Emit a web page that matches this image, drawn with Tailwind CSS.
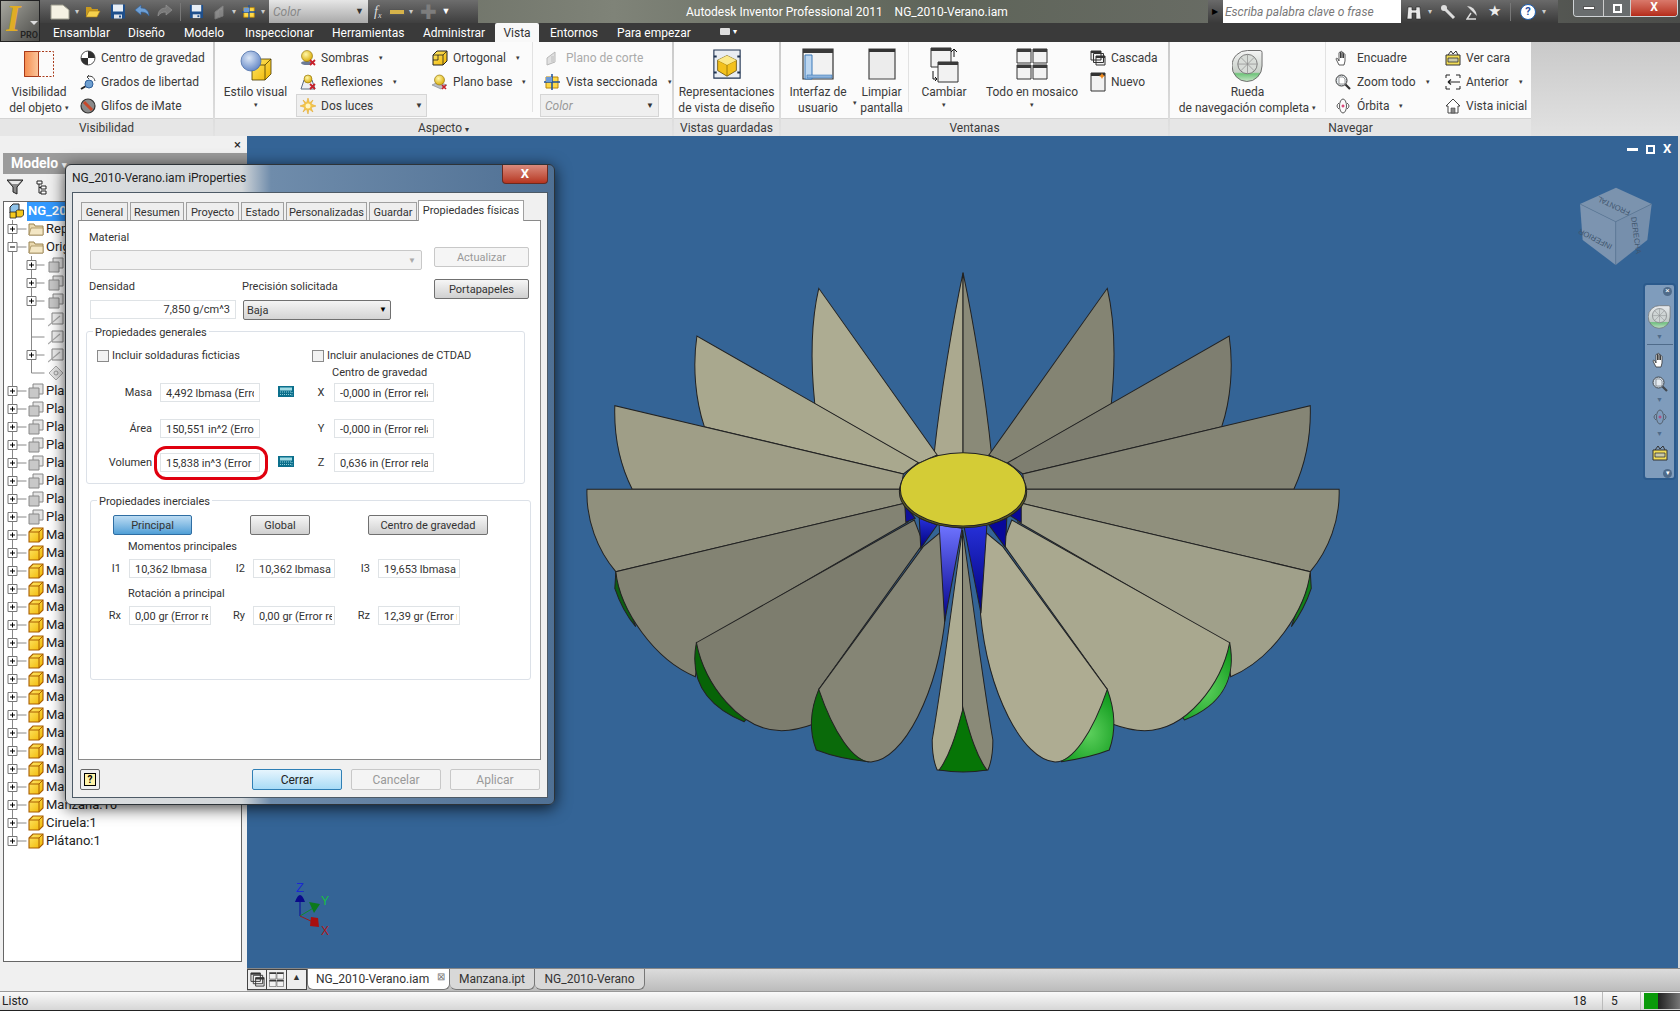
<!DOCTYPE html>
<html lang="es">
<head>
<meta charset="UTF-8">
<title>Autodesk Inventor Professional 2011</title>
<script src="https://cdn.jsdelivr.net/npm/@tailwindcss/browser@4"></script>
</head>
<body class="relative w-[1680px] h-[1011px] overflow-hidden flex flex-col bg-[#f0f0f0] text-[12px] text-[#3a3a3a] font-['Roboto',sans-serif]">

<!-- icon sheet -->
<svg class="absolute w-0 h-0" aria-hidden="true">
  <defs>
    <linearGradient id="gOrange" x1="0" x2="1"><stop offset="0" stop-color="#f58a4b"/><stop offset="1" stop-color="#fbc9a0"/></linearGradient>
    <radialGradient id="gBall" cx=".4" cy=".35" r=".7"><stop offset="0" stop-color="#dbe7f7"/><stop offset="1" stop-color="#5f83c4"/></radialGradient>
    <radialGradient id="gYellowBall" cx=".4" cy=".35" r=".7"><stop offset="0" stop-color="#fff7a8"/><stop offset="1" stop-color="#d8a800"/></radialGradient>
    <linearGradient id="gCube" x1="0" y1="0" x2="1" y2="1"><stop offset="0" stop-color="#ffe96a"/><stop offset="1" stop-color="#f0b400"/></linearGradient>
    <linearGradient id="gWheel" x1="0" y1="0" x2="0" y2="1"><stop offset="0" stop-color="#f4f4f4"/><stop offset=".7" stop-color="#c8cfc8"/><stop offset=".75" stop-color="#6fc47a"/><stop offset="1" stop-color="#c8e6c8"/></linearGradient>
    <linearGradient id="gBlueL" x1="0" y1="0" x2="0" y2="1"><stop offset="0" stop-color="#6f74ff"/><stop offset="1" stop-color="#00008a"/></linearGradient>
    <linearGradient id="gBlueD" x1="0" y1="0" x2="0" y2="1"><stop offset="0" stop-color="#2630d8"/><stop offset="1" stop-color="#00007a"/></linearGradient>
    <radialGradient id="gGreenR" cx=".6" cy=".6" r=".6"><stop offset="0" stop-color="#5ccf5c"/><stop offset="1" stop-color="#0f9a1c"/></radialGradient>
  </defs>
  <symbol id="i-new" viewBox="0 0 20 20"><path d="M1 3h12l6 5v9H1z" fill="#f4f1e2" stroke="#9b9b8c"/></symbol>
  <symbol id="i-open" viewBox="0 0 16 16"><path d="M1 3h5l1 2h6v2H4L1 13z" fill="#c99a1e"/><path d="M4 7h11l-3 6H1z" fill="#f5d04c" stroke="#a87a10" stroke-width=".6"/></symbol>
  <symbol id="i-save" viewBox="0 0 16 16"><path d="M1 1h14v14H1z" fill="#1e4f8c"/><path d="M3 1h10v7H3z" fill="#e8eef5"/><path d="M4 11h8v4H4z" fill="#dfe4ea"/><path d="M9 12h2v2H9z" fill="#1e4f8c"/></symbol>
  <symbol id="i-undo" viewBox="0 0 16 16"><path d="M1 6l6-5v3c5 0 8 3 8 8-2-3-4-4-8-4v3z" fill="#6ea0d6" stroke="#2f5f9a" stroke-width=".6"/></symbol>
  <symbol id="i-redo" viewBox="0 0 16 16"><path d="M15 6L9 1v3C4 4 1 7 1 12c2-3 4-4 8-4v3z" fill="#7a7a7a" stroke="#999" stroke-width=".6"/></symbol>
  <symbol id="i-cog" viewBox="0 0 16 16"><circle cx="8" cy="8" r="7" fill="#fff" stroke="#555"/><path d="M8 8V1a7 7 0 0 1 7 7zM8 8v7a7 7 0 0 1-7-7z" fill="#2f2f2f"/></symbol>
  <symbol id="i-dof" viewBox="0 0 16 16"><path d="M1 15l5-3" stroke="#222" stroke-width="2"/><circle cx="9" cy="10" r="4" fill="#6e9fd0" stroke="#2f5f9a"/><path d="M7 3c4-2 7 0 8 4M7 3l2-2M7 3l2 2" fill="none" stroke="#444"/></symbol>
  <symbol id="i-imate" viewBox="0 0 16 16"><circle cx="8" cy="8" r="7" fill="#8a8a8a" stroke="#333" stroke-width="1.2"/><path d="M4 4l8 8" stroke="#c9482a" stroke-width="3"/></symbol>
  <symbol id="i-style" viewBox="0 0 32 32"><path d="M12 14l5-5h14v15l-6 6H12z" fill="url(#gCube)" stroke="#4a3a00" stroke-width=".8"/><path d="M25 30V15l6-6M25 15H12" fill="none" stroke="#4a3a00" stroke-width=".8"/><circle cx="11" cy="11" r="10" fill="url(#gBall)" stroke="#4b6ea8" stroke-width=".8"/></symbol>
  <symbol id="i-shadow" viewBox="0 0 16 16"><ellipse cx="7" cy="13" rx="6" ry="2" fill="#6c7a96"/><circle cx="7" cy="6" r="5.5" fill="url(#gYellowBall)" stroke="#8a6c00" stroke-width=".6"/><path d="M10 10l5 5M15 10l-5 5" stroke="#c8202a" stroke-width="1.8"/></symbol>
  <symbol id="i-reflect" viewBox="0 0 16 16"><path d="M1 15l3-9h8l3 9z" fill="#eceff4" stroke="#5a6a80"/><circle cx="8" cy="5" r="4" fill="url(#gYellowBall)" stroke="#8a6c00" stroke-width=".6"/><path d="M10 10l5 5M15 10l-5 5" stroke="#c8202a" stroke-width="1.8"/></symbol>
  <symbol id="i-burst" viewBox="0 0 16 16"><path d="M8 0l1.500 5L13 2l-2 4 5 2-5 1.500 2 4.500-4-3-1 5-1.500-5L3 14l2-4.500L0 8l5-2-2-4 3.500 3z" fill="#f5c84a" stroke="#e0a020" stroke-width=".5"/><circle cx="8" cy="8" r="2.500" fill="#fff4c0"/></symbol>
  <symbol id="i-ortho" viewBox="0 0 16 16"><path d="M1 5l4-4h10v10l-4 4H1z" fill="url(#gCube)" stroke="#222"/><path d="M1 5h10v10M11 5l4-4M1 10h5V5" fill="none" stroke="#222" stroke-width=".8"/></symbol>
  <symbol id="i-base" viewBox="0 0 16 16"><path d="M0 11l6-3 9 3-6 4z" fill="#b9bec6" stroke="#7a808a" stroke-width=".6"/><circle cx="7.500" cy="6" r="5" fill="url(#gYellowBall)" stroke="#8a6c00" stroke-width=".6"/><path d="M10 11l4 4M14 11l-4 4" stroke="#c8202a" stroke-width="1.600"/></symbol>
  <symbol id="i-cut" viewBox="0 0 16 16"><path d="M3 8l8-6v10l-8 3z" fill="#e0e0e0" stroke="#b8b8b8"/><path d="M7 6h4v6H7z" fill="#cfcfcf"/></symbol>
  <symbol id="i-section" viewBox="0 0 16 16"><path d="M2 3h12v11H2z" fill="#ffd948" stroke="#b8860b"/><path d="M8 0v16M0 8h16" stroke="#1d4f9c" stroke-width="1.500"/><path d="M2 3h6v5H2z" fill="#6d9bd8"/></symbol>
  <symbol id="i-rep" viewBox="0 0 32 32"><path d="M2 1h28v30H2z" fill="#e9edf2" stroke="#1f3350" stroke-width="1.200"/><path d="M16 7l10 5v11l-10 6-10-6V12z" fill="#f3c11c" stroke="#5a4400" stroke-width=".8"/><path d="M6 12l10 5 10-5M16 17v12" fill="none" stroke="#8a6800" stroke-width=".8"/><path d="M16 7l10 5-10 5-10-5z" fill="#fbe98a"/><path d="M2 7h3v2H2zM27 7h3v2h-3zM2 24h3v2H2zM27 24h3v2h-3z" fill="#1f3350"/></symbol>
  <symbol id="i-ui" viewBox="0 0 32 32"><path d="M1 1h30v30H1z" fill="#f2f2f2" stroke="#333" stroke-width="1.200"/><path d="M1 1h30v4H1z" fill="#3a3a3a"/><path d="M3 7h7v24H3z" fill="#bcd6f0" stroke="#3a78b8"/><path d="M5 27h25v3H5z" fill="#8fb4dc" stroke="#3a78b8" stroke-width=".6"/></symbol>
  <symbol id="i-clean" viewBox="0 0 28 32"><path d="M1 1h26v30H1z" fill="#ececec" stroke="#444" stroke-width="1.200"/><path d="M1 1h26v3H1z" fill="#333"/></symbol>
  <symbol id="i-switch" viewBox="0 0 32 36"><path d="M3 1h20v19H3z" fill="#f2f2f2" stroke="#333"/><path d="M3 1h20v3H3z" fill="#3a3a3a"/><path d="M10 15h20v20H10z" fill="#f2f2f2" stroke="#333"/><path d="M10 15h20v3H10z" fill="#3a3a3a"/><path d="M26 10V2l-3 3M26 2l3 3M5 24v8h4m0 0l-2-2m2 2l-2 2" fill="none" stroke="#111"/></symbol>
  <symbol id="i-tile" viewBox="0 0 32 32"><g fill="#f2f2f2" stroke="#333"><path d="M1 1h14v14H1zM17 1h14v14H17zM1 17h14v14H1zM17 17h14v14H17z"/></g><g fill="#3a3a3a"><path d="M1 1h14v3H1zM17 1h14v3H17zM1 17h14v3H1zM17 17h14v3H17z"/></g></symbol>
  <symbol id="i-cascade" viewBox="0 0 16 16"><g fill="#f2f2f2" stroke="#333"><path d="M1 1h10v9H1zM3.500 3.500h10v9h-10zM6 6h9v9H6z"/></g><path d="M1 1h10v2H1zM6 6h9v2H6z" fill="#333"/></symbol>
  <symbol id="i-newwin" viewBox="0 0 16 20"><path d="M1 1h14v18H1z" fill="#f2f2f2" stroke="#333"/><path d="M1 1h14v3H1z" fill="#333"/><path d="M12 1l1 2 2 1-2 1-1 2-1-2-2-1 2-1z" fill="#f08a1c"/></symbol>
  <symbol id="i-wheel" viewBox="0 0 32 34"><path d="M16 1h13q2 0 2 2v14a15.500 16 0 1 1-15-16z" fill="url(#gWheel)" stroke="#6b6b6b"/><circle cx="16" cy="15" r="10" fill="#d8dcd8" stroke="#7a7a7a"/><path d="M16 5v20M6 15h20M9 8l14 14M23 8L9 22" stroke="#8a8a8a" stroke-width=".7"/></symbol>
  <symbol id="i-hand" viewBox="0 0 16 16"><path d="M4 15L1 9c0-1 1-1 2 0l1 2V3c0-1 1.500-1 1.500 0v5V2c0-1 1.500-1 1.500 0v6V3c0-1 1.500-1 1.500 0v5V4.500c0-1 1.500-1 1.500 0V11l-1 4z" fill="#fff" stroke="#333" stroke-width=".8"/></symbol>
  <symbol id="i-zoom" viewBox="0 0 16 16"><circle cx="6.500" cy="6.500" r="5.500" fill="#e8eef2" stroke="#333"/><path d="M4 3h4l2 2v5H4z" fill="#fff" stroke="#555" stroke-width=".6"/><path d="M10.500 10.500L15 15" stroke="#333" stroke-width="2.200"/></symbol>
  <symbol id="i-orbit" viewBox="0 0 16 16"><ellipse cx="8" cy="8" rx="3.500" ry="7" fill="none" stroke="#333" stroke-width=".8"/><path d="M4 5Q0 8 4 11M12 5q4 3 0 6" fill="none" stroke="#333" stroke-width=".8"/><path d="M6.500 8h3M8 6.500v3" stroke="#d01050"/></symbol>
  <symbol id="i-face" viewBox="0 0 16 16"><path d="M3 5l3-4 2 3 3-3 2 4" fill="none" stroke="#333"/><path d="M1 5h14v10H1z" fill="#f1dc56" stroke="#333"/><path d="M3 8h10v4H3z" fill="#c9c9a8" stroke="#333" stroke-width=".8"/></symbol>
  <symbol id="i-prev" viewBox="0 0 16 16"><path d="M1 4V1h4M11 1h4v3M15 12v3h-4M5 15H1v-3" fill="none" stroke="#222"/><path d="M3 8h12M3 8l3-2.500M3 8l3 2.500" fill="none" stroke="#222" stroke-width="1.200"/></symbol>
  <symbol id="i-home" viewBox="0 0 16 16"><path d="M1 8l7-7 7 7h-2v7H3V8z" fill="#fff" stroke="#444"/><path d="M6 15v-5h4v5z" fill="#888" stroke="#444" stroke-width=".6"/></symbol>
  <symbol id="i-part" viewBox="0 0 16 16"><path d="M1 5l4-4h10v10l-4 4H1z" fill="url(#gCube)" stroke="#a85c00" stroke-width="1.100"/><path d="M1 5h10v10M11 5l4-4" fill="none" stroke="#a85c00"/></symbol>
  <symbol id="i-asm" viewBox="0 0 16 16"><path d="M1 4l3-3h6v6l-3 3H1z" fill="#8fc3ea" stroke="#222"/><path d="M7 8l1.500-1h6v5l-2 2H7z" fill="#f5c91c" stroke="#222" stroke-width=".8"/><path d="M1 9h6v6H1z" fill="#f5c91c" stroke="#222" stroke-width=".8"/></symbol>
  <symbol id="i-folder" viewBox="0 0 16 16"><path d="M1 3h5l1 2h8v9H1z" fill="#e9d8ae" stroke="#9a8350"/><path d="M1 14l2-7h12v7z" fill="#f3e6c4" stroke="#9a8350" stroke-width=".7"/></symbol>
  <symbol id="i-plane" viewBox="0 0 16 16"><path d="M5 1h10v10H5z" fill="#e4e4e4" stroke="#888"/><path d="M1 5h10v10H1z" fill="#c8c8c8" stroke="#888"/></symbol>
  <symbol id="i-axis" viewBox="0 0 16 16"><path d="M4 2h11v11H4z" fill="#f0f0f0" stroke="#888"/><path d="M0 15L12 5" stroke="#aaa" stroke-width="1.200"/></symbol>
  <symbol id="i-point" viewBox="0 0 16 16"><path d="M8 1l7 7-7 7-7-7z" fill="#e8e8e8" stroke="#aaa"/><circle cx="8" cy="8" r="2" fill="none" stroke="#999"/></symbol>
  <symbol id="i-filter" viewBox="0 0 16 16"><path d="M0 1h16l-6 7v7l-4-2V8z" fill="#888" stroke="#222"/><path d="M2 2h12l-3 3H5z" fill="#e8e8e8"/></symbol>
  <symbol id="i-calc" viewBox="0 0 16 11"><path d="M0 0h16v11H0z" fill="#0b6f8c"/><path d="M2 1.500h12v3H2z" fill="#9fdbe4"/><path d="M2 6h12v1M2 8.500h12v1" stroke="#8fd0da" stroke-dasharray="1 1" fill="none"/></symbol>
</svg>

<!-- app button + title bar + ribbon tabs -->
<div class="flex h-[42px] shrink-0 bg-[#3a3a3a]">
  <div class="relative w-[40px] h-[42px] border border-[#222] bg-linear-to-br from-[#a8a8a0] to-[#4b4b48] overflow-hidden">
    <span class="absolute left-[5px] top-[-3px] text-[37px] leading-[42px] font-bold italic text-[#e0ac25] font-['Liberation_Serif',serif]">I</span>
    <span class="absolute left-[29px] top-[20px] w-0 h-0 border-x-[4px] border-x-transparent border-t-[4px] border-t-[#ddd]"></span>
    <span class="absolute right-[1px] bottom-0 text-[9px] leading-[12px] text-[#222] font-semibold">PRO</span>
  </div>
  <div class="flex-1 flex flex-col">
    <div class="flex h-[23px] bg-[linear-gradient(90deg,#4d5148,#7f8378_35%,#5e6459_55%,#6a6d66_75%,#4b4d4a)]">
      <div class="w-[438px] flex items-center pl-[10px] bg-linear-to-b from-[#6d6d6d] to-[#3f3f3f] text-[#ccc]">
        <svg class="w-[20px] h-[20px]"><use href="#i-new"/></svg>
        <span class="ml-[5px] text-[8px]">▾</span>
        <svg class="ml-[6px] w-[16px] h-[16px]"><use href="#i-open"/></svg>
        <svg class="ml-[9px] w-[16px] h-[17px]"><use href="#i-save"/></svg>
        <svg class="ml-[8px] w-[16px] h-[16px]"><use href="#i-undo"/></svg>
        <svg class="ml-[7px] w-[16px] h-[16px]"><use href="#i-redo"/></svg>
        <span class="ml-[7px] w-px h-[18px] bg-[#777]"></span>
        <svg class="ml-[8px] w-[15px] h-[17px]"><use href="#i-save"/></svg>
        <svg class="ml-[8px] w-[16px] h-[16px] opacity-40"><use href="#i-cut"/></svg>
        <span class="ml-[4px] text-[8px]">▾</span>
        <svg class="ml-[6px] w-[14px] h-[16px]"><use href="#i-section"/></svg>
        <span class="ml-[5px] text-[8px]">▾</span>
        <div class="ml-[4px] w-[99px] h-[23px] flex items-center justify-between px-[4px] bg-linear-to-b from-[#e6e6e6] to-[#a9a9a9] text-[#888] italic"><span>Color</span><span class="text-[9px] not-italic text-[#333]">▼</span></div>
        <span class="ml-[6px] italic text-[14px] text-[#ddd] font-['Liberation_Serif',serif]">f<sub class="text-[8px]">x</sub></span>
        <span class="ml-[8px] w-[16px] h-[6px] bg-[#d6b34a] border border-[#555]"></span>
        <span class="ml-[4px] text-[8px]">▾</span>
        <span class="ml-[7px] text-[20px] leading-[20px] text-[#7d7d7d]">✚</span>
        <span class="ml-[4px] text-[9px] text-white">▼</span>
      </div>
      <div class="w-[730px] pl-[208px] leading-[24px] text-white whitespace-nowrap">Autodesk Inventor Professional 2011 &nbsp; &nbsp;NG_2010-Verano.iam</div>
      <div class="w-[350px] flex items-center pl-[4px] bg-linear-to-b from-[#6a6a6a] to-[#3a3a3a] text-[#ccc]">
        <span class="text-[8px] w-[11px] text-black">▶</span>
        <div class="w-[178px] h-[23px] bg-white italic text-[#777] leading-[24px] pl-[2px]">Escriba palabra clave o frase</div>
        <svg class="ml-[5px] w-[16px] h-[16px]" viewBox="0 0 16 16"><path d="M2 3h4v3h4V3h4l1 12h-5V9H6v6H1z" fill="#e8e8e8" stroke="#222" stroke-width=".6"/></svg>
        <span class="ml-[6px] text-[8px]">▾</span>
        <svg class="ml-[8px] w-[16px] h-[16px]" viewBox="0 0 16 16"><circle cx="4" cy="4" r="3" fill="#ddd"/><path d="M5 5l9 9" stroke="#ddd" stroke-width="3"/></svg>
        <svg class="ml-[10px] w-[14px] h-[16px]" viewBox="0 0 14 16"><path d="M1 2q8 0 10 10z" fill="#ddd"/><path d="M5 9l-4 6h9" fill="none" stroke="#ddd" stroke-width="1.400"/></svg>
        <span class="ml-[8px] text-[15px] leading-[15px] text-[#eee]">★</span>
        <span class="ml-[9px] w-px h-[18px] bg-[#777]"></span>
        <span class="ml-[9px] w-[16px] h-[16px] rounded-full bg-white border border-[#1f5fb0] text-center text-[11px] leading-[14px] font-bold text-[#1f4fa0]">?</span>
        <span class="ml-[6px] text-[8px]">▾</span>
      </div>
      <div class="ml-[15px] flex h-[17px] w-[105px] border border-t-0 border-[#cfd3d6] rounded-b-[4px] overflow-hidden">
        <div class="w-[30px] flex items-center justify-center bg-[#73787a]/70 border-r border-[#ccc]"><span class="w-[12px] h-[4px] bg-white border border-[#555]"></span></div>
        <div class="w-[27px] flex items-center justify-center bg-[#73787a]/70 border-r border-[#ccc]"><span class="w-[9px] h-[9px] border-2 border-white"></span></div>
        <div class="flex-1 text-center text-[12px] leading-[15px] font-bold text-white bg-linear-to-b from-[#d9796b] to-[#b52a18]">X</div>
      </div>
    </div>
    <div class="flex h-[19px] text-white leading-[21px]">
      <span class="w-[13px]"></span>
      <span class="w-[75px]">Ensamblar</span>
      <span class="w-[56px]">Diseño</span>
      <span class="w-[61px]">Modelo</span>
      <span class="w-[87px]">Inspeccionar</span>
      <span class="w-[91px]">Herramientas</span>
      <span class="w-[72px]">Administrar</span>
      <span class="w-[44px] text-center bg-[#f8f8f8] text-[#333] rounded-t-[2px]">Vista</span>
      <span class="w-[11px]"></span>
      <span class="w-[67px]">Entornos</span>
      <span class="w-[103px]">Para empezar</span>
      <span class="w-[10px] h-[7px] mt-[5px] bg-[#ddd] rounded-[1px]"></span>
      <span class="ml-[3px] text-[8px] leading-[17px]">▾</span>
    </div>
  </div>
</div>

<!-- ribbon -->
<div class="flex h-[94px] shrink-0 bg-linear-to-b from-[#c9c9c9] to-[#e2e2e2]">
  <!-- Visibilidad -->
  <section class="w-[213px] mr-[2px] flex flex-col bg-[#fbfbfb]">
    <div class="flex h-[76px]">
      <div class="w-[78px] flex flex-col items-center">
        <svg class="shrink-0 mt-[9px] w-[30px] h-[26px] mb-[7px]" viewBox="0 0 30 26"><path d="M0 0h15v26H0z" fill="url(#gOrange)"/><path d="M.5.500h29v25H.5z" fill="none" stroke="#a83a1a" stroke-dasharray="2 1.500"/><path d="M.5.500h14v25H.5z" fill="none" stroke="#a83a1a"/></svg>
        <div class="text-center leading-[16px]">Visibilidad<br>del objeto <span class="text-[7px] align-top">▾</span></div>
      </div>
      <div class="pl-[2px] pt-[4px]">
        <div class="flex items-center h-[24px]"><svg class="w-[16px] h-[16px] mr-[5px]"><use href="#i-cog"/></svg>Centro de gravedad</div>
        <div class="flex items-center h-[24px]"><svg class="w-[16px] h-[16px] mr-[5px]"><use href="#i-dof"/></svg>Grados de libertad</div>
        <div class="flex items-center h-[24px]"><svg class="w-[16px] h-[16px] mr-[5px]"><use href="#i-imate"/></svg>Glifos de iMate</div>
      </div>
    </div>
    <div class="h-[18px] text-center leading-[19px] bg-[#e6e6e6] border-t border-[#d4d4d4]">Visibilidad</div>
  </section>
  <!-- Aspecto -->
  <section class="w-[457px] mr-[2px] flex flex-col bg-[#fbfbfb]">
    <div class="flex h-[76px]">
      <div class="w-[81px] flex flex-col items-center">
        <svg class="shrink-0 mt-[8px] w-[32px] h-[32px] mb-[2px]"><use href="#i-style"/></svg>
        <div class="text-center leading-[16px]">Estilo visual<br><span class="text-[7px] leading-[10px] block">▾</span></div>
      </div>
      <div class="w-[136px] pt-[4px]">
        <div class="flex items-center h-[24px] pl-[4px]"><svg class="w-[16px] h-[16px] mr-[5px]"><use href="#i-shadow"/></svg>Sombras<span class="ml-[10px] text-[7px]">▾</span></div>
        <div class="flex items-center h-[24px] pl-[4px]"><svg class="w-[16px] h-[16px] mr-[5px]"><use href="#i-reflect"/></svg>Reflexiones<span class="ml-[10px] text-[7px]">▾</span></div>
        <div class="flex items-center justify-between h-[23px] w-[131px] border border-[#d5d5d5] bg-[#efefef] px-[3px]"><div class="flex items-center"><svg class="w-[16px] h-[16px] mr-[5px]"><use href="#i-burst"/></svg>Dos luces</div><span class="text-[8px]">▼</span></div>
      </div>
      <div class="w-[101px] pt-[4px] border-r border-[#e2e2e2] h-[70px]">
        <div class="flex items-center h-[24px]"><svg class="w-[16px] h-[16px] mr-[5px]"><use href="#i-ortho"/></svg>Ortogonal<span class="ml-[10px] text-[7px]">▾</span></div>
        <div class="flex items-center h-[24px]"><svg class="w-[16px] h-[16px] mr-[5px]"><use href="#i-base"/></svg>Plano base<span class="ml-[10px] text-[7px]">▾</span></div>
      </div>
      <div class="pt-[4px] pl-[7px]">
        <div class="flex items-center h-[24px] pl-[4px] text-[#aaa]"><svg class="w-[16px] h-[16px] mr-[6px]"><use href="#i-cut"/></svg>Plano de corte</div>
        <div class="flex items-center h-[24px] pl-[4px]"><svg class="w-[16px] h-[16px] mr-[6px]"><use href="#i-section"/></svg>Vista seccionada<span class="ml-[10px] text-[7px]">▾</span></div>
        <div class="flex items-center justify-between h-[23px] w-[119px] border border-[#d5d5d5] bg-[#efefef] px-[4px] italic text-[#999]"><span>Color</span><span class="text-[8px] not-italic text-[#333]">▼</span></div>
      </div>
    </div>
    <div class="h-[18px] text-center leading-[19px] bg-[#e6e6e6] border-t border-[#d4d4d4]">Aspecto <span class="text-[8px]">▾</span></div>
  </section>
  <!-- Vistas guardadas -->
  <section class="w-[105px] mr-[2px] flex flex-col bg-[#fbfbfb]">
    <div class="h-[76px] flex flex-col items-center">
      <svg class="shrink-0 mt-[6px] w-[30px] h-[32px] mb-[4px]"><use href="#i-rep"/></svg>
      <div class="text-center leading-[16px] whitespace-nowrap">Representaciones<br>de vista de diseño</div>
    </div>
    <div class="h-[18px] text-center leading-[19px] bg-[#e6e6e6] border-t border-[#d4d4d4]">Vistas guardadas</div>
  </section>
  <!-- Ventanas -->
  <section class="w-[387px] mr-[2px] flex flex-col bg-[#fbfbfb]">
    <div class="flex h-[76px]">
      <div class="w-[74px] flex flex-col items-center">
        <svg class="shrink-0 mt-[6px] w-[32px] h-[32px] mb-[4px]"><use href="#i-ui"/></svg>
        <div class="text-center leading-[16px]">Interfaz de<br>usuario</div>
      </div>
      <div class="relative w-[54px] flex flex-col items-center border-r border-[#e2e2e2] h-[70px]">
        <svg class="shrink-0 mt-[6px] w-[28px] h-[32px] mb-[4px]"><use href="#i-clean"/></svg>
        <div class="text-center leading-[16px]">Limpiar<br>pantalla</div>
        <span class="absolute left-[-2px] top-[56px] text-[7px]">▾</span>
      </div>
      <div class="w-[70px] flex flex-col items-center">
        <svg class="shrink-0 mt-[5px] w-[32px] h-[36px] mb-[1px]"><use href="#i-switch"/></svg>
        <div class="text-center leading-[16px]">Cambiar<br><span class="text-[7px] leading-[10px] block">▾</span></div>
      </div>
      <div class="w-[106px] flex flex-col items-center">
        <svg class="shrink-0 mt-[6px] w-[32px] h-[32px] mb-[4px]"><use href="#i-tile"/></svg>
        <div class="text-center leading-[16px] whitespace-nowrap">Todo en mosaico<br><span class="text-[7px] leading-[10px] block">▾</span></div>
      </div>
      <div class="pt-[4px] pl-[5px]">
        <div class="flex items-center h-[24px]"><svg class="w-[16px] h-[16px] mr-[5px]"><use href="#i-cascade"/></svg>Cascada</div>
        <div class="flex items-center h-[24px]"><svg class="w-[16px] h-[20px] mr-[5px]"><use href="#i-newwin"/></svg>Nuevo</div>
      </div>
    </div>
    <div class="h-[18px] text-center leading-[19px] bg-[#e6e6e6] border-t border-[#d4d4d4]">Ventanas</div>
  </section>
  <!-- Navegar -->
  <section class="w-[361px] flex flex-col bg-[#fbfbfb]">
    <div class="flex h-[76px]">
      <div class="w-[156px] flex flex-col items-center border-r border-[#e2e2e2] h-[70px]">
        <svg class="shrink-0 mt-[7px] w-[31px] h-[34px] mb-[1px]"><use href="#i-wheel"/></svg>
        <div class="text-center leading-[16px] whitespace-nowrap">Rueda<br>de navegación completa <span class="text-[7px] align-top">▾</span></div>
      </div>
      <div class="w-[119px] pt-[4px] pl-[9px]">
        <div class="flex items-center h-[24px]"><svg class="w-[16px] h-[16px] mr-[6px]"><use href="#i-hand"/></svg>Encuadre</div>
        <div class="flex items-center h-[24px]"><svg class="w-[16px] h-[16px] mr-[6px]"><use href="#i-zoom"/></svg>Zoom todo<span class="ml-[10px] text-[7px]">▾</span></div>
        <div class="flex items-center h-[24px]"><svg class="w-[16px] h-[16px] mr-[6px]"><use href="#i-orbit"/></svg>Órbita<span class="ml-[10px] text-[7px]">▾</span></div>
      </div>
      <div class="pt-[4px]">
        <div class="flex items-center h-[24px]"><svg class="w-[16px] h-[16px] mr-[5px]"><use href="#i-face"/></svg>Ver cara</div>
        <div class="flex items-center h-[24px]"><svg class="w-[16px] h-[16px] mr-[5px]"><use href="#i-prev"/></svg>Anterior<span class="ml-[10px] text-[7px]">▾</span></div>
        <div class="flex items-center h-[24px]"><svg class="w-[16px] h-[16px] mr-[5px]"><use href="#i-home"/></svg>Vista inicial</div>
      </div>
    </div>
    <div class="h-[18px] text-center leading-[19px] bg-[#e6e6e6] border-t border-[#d4d4d4]">Navegar</div>
  </section>
</div>

<!-- workspace -->
<div class="flex h-[855px] shrink-0">
  <!-- model browser -->
  <aside class="w-[247px] shrink-0 flex flex-col pl-[3px]">
    <div class="h-[17px] pr-[6px] text-right text-[13px] leading-[17px] text-[#222]">×</div>
    <div class="h-[21px] bg-[#9b9b9b] text-white font-bold text-[14px] leading-[20px] pl-[8px]">Modelo <span class="text-[9px]">▾</span></div>
    <div class="h-[25px] flex items-center pl-[4px]">
      <svg class="w-[16px] h-[16px]"><use href="#i-filter"/></svg>
      <svg class="ml-[12px] w-[16px] h-[16px]" viewBox="0 0 16 16"><path d="M2 2h5v3H2zM6 7h5v3H6zM6 12h5v3H6z" fill="#fff" stroke="#222"/><path d="M4 5v9h2M4 8.500h2" fill="none" stroke="#222"/></svg>
    </div>
    <div id="tree" class="mt-[2px] h-[761px] w-[239px] bg-white border border-[#666] overflow-hidden text-[13px]"></div>
  </aside>

  <!-- graphics area -->
  <main class="flex-1 flex flex-col min-w-0">
    <div class="relative h-[832px] bg-[#346496] border-r-2 border-[#d8d8d8] overflow-hidden">
      <!-- flower model: canvas drawing, coords in a 1568x1560 box mapped to 780x520 -->
      <svg class="absolute left-[333px] top-[124px] w-[780px] h-[520px]" viewBox="0 0 1568 1560" preserveAspectRatio="none" stroke="#222" stroke-width="1">
        <path vector-effect="non-scaling-stroke" d="M770 38C750 180 725 400 712 580L770 640Z" fill="#aba98f"/>
        <path vector-effect="non-scaling-stroke" d="M770 38C790 180 815 400 827 580L770 640Z" fill="#8a8a78"/>
        <path vector-effect="non-scaling-stroke" d="M480 85C462 200 465 330 472 432L680 610L718 585Z" fill="#adac92"/>
        <path vector-effect="non-scaling-stroke" d="M1060 85C1078 200 1075 330 1068 432L860 610L822 585Z" fill="#848473"/>
        <path vector-effect="non-scaling-stroke" d="M235 228C226 320 232 420 250 500L650 642L680 608Z" fill="#a9a88e"/>
        <path vector-effect="non-scaling-stroke" d="M1305 228C1314 320 1308 420 1290 500L890 642L860 608Z" fill="#7e7e70"/>
        <path vector-effect="non-scaling-stroke" d="M70 437C68 530 82 620 105 688L645 688L650 642Z" fill="#9f9e87"/>
        <path vector-effect="non-scaling-stroke" d="M1468 437C1470 530 1456 620 1435 688L895 688L890 642Z" fill="#858575"/>
        <path vector-effect="non-scaling-stroke" d="M72 935L70 985C80 1030 95 1070 112 1100Z" fill="#0d5f12"/>
        <path vector-effect="non-scaling-stroke" d="M1468 935L1470 985C1460 1030 1445 1070 1430 1100Z" fill="#12801a"/>
        <path vector-effect="non-scaling-stroke" d="M14 688L645 688L652 730L72 935C35 870 12 780 14 688Z" fill="#90907d"/>
        <path vector-effect="non-scaling-stroke" d="M1526 688L895 688L888 730L1468 935C1505 870 1528 780 1526 688Z" fill="#90907d"/>
        <path vector-effect="non-scaling-stroke" d="M72 935C80 1050 150 1200 232 1250L240 1148L660 785L652 730Z" fill="#838373"/>
        <path vector-effect="non-scaling-stroke" d="M1468 935C1460 1050 1390 1200 1308 1250L1300 1148L880 785L888 730Z" fill="#a0a08a"/>
        <path vector-effect="non-scaling-stroke" d="M234 1148C222 1240 240 1330 330 1385L380 1300Z" fill="#076407"/>
        <path vector-effect="non-scaling-stroke" d="M1306 1148C1318 1240 1300 1330 1215 1380L1180 1300Z" fill="url(#gGreenR)"/>
        <path vector-effect="non-scaling-stroke" d="M234 1148C250 1270 320 1412 405 1412C430 1412 450 1403 470 1392L480 1288L690 850L672 780Z" fill="#7d7d6e"/>
        <path vector-effect="non-scaling-stroke" d="M1306 1148C1290 1270 1220 1412 1135 1412C1110 1412 1090 1403 1070 1392L1060 1288L850 850L868 780Z" fill="#a9a88f"/>
        <path vector-effect="non-scaling-stroke" d="M480 1288C460 1360 462 1420 475 1470C510 1490 545 1500 580 1505L600 1400Z" fill="#0a6a0a"/>
        <path vector-effect="non-scaling-stroke" d="M1060 1288C1078 1360 1076 1420 1064 1470C1030 1490 1000 1498 968 1505L950 1400Z" fill="url(#gGreenR)"/>
        <path vector-effect="non-scaling-stroke" d="M480 1288C510 1420 550 1506 585 1506C650 1500 720 1300 735 1060L730 810L690 860Z" fill="#858575"/>
        <path vector-effect="non-scaling-stroke" d="M1060 1288C1030 1420 990 1506 955 1506C890 1500 820 1300 805 1060L810 810L850 860Z" fill="#aeac92"/>
        <path vector-effect="non-scaling-stroke" d="M653 735L674 775L655 787Z" fill="#10109a"/>
        <path vector-effect="non-scaling-stroke" d="M682 775L718 795L685 865Z" fill="url(#gBlueD)"/>
        <path vector-effect="non-scaling-stroke" d="M722 795L768 805L733 1085Z" fill="url(#gBlueL)"/>
        <path vector-effect="non-scaling-stroke" d="M772 800L818 795L806 1060Z" fill="url(#gBlueD)"/>
        <path vector-effect="non-scaling-stroke" d="M822 795L858 775L855 862Z" fill="#08089a"/>
        <path vector-effect="non-scaling-stroke" d="M865 767L887 735L887 788Z" fill="#08089a"/>
        <path vector-effect="non-scaling-stroke" d="M769 810C755 950 730 1250 708 1440C708 1480 712 1510 718 1530L769 1530Z" fill="#adac92"/>
        <path vector-effect="non-scaling-stroke" d="M769 810C783 950 808 1250 830 1440C830 1480 826 1510 820 1530L769 1530Z" fill="#8a8a78"/>
        <path vector-effect="non-scaling-stroke" d="M770 1345C755 1430 742 1490 722 1530Q770 1542 818 1530C798 1490 785 1430 770 1345Z" fill="#067506"/>
        <ellipse vector-effect="non-scaling-stroke" cx="770" cy="695" rx="128" ry="108" fill="#5d5c22"/>
        <ellipse vector-effect="non-scaling-stroke" cx="770" cy="688" rx="126" ry="110" fill="#d4cc36"/>
      </svg>

      <!-- window controls of the view -->
      <div class="absolute right-[4px] top-[6px] flex items-center gap-[8px] text-white">
        <span class="w-[11px] h-[3px] bg-white"></span>
        <span class="w-[9px] h-[9px] border-2 border-white"></span>
        <span class="font-bold text-[13px] leading-[14px] w-[11px]">X</span>
      </div>

      <!-- view cube -->
      <svg class="absolute left-[1313px] top-[4px] w-[120px] h-[350px]" viewBox="0 0 360 1050">
        <path d="M168 143L275 192L167 245L60 192Z" fill="#7b93ae"/>
        <path d="M60 192L167 245V375L68 300Z" fill="#7c94b0"/>
        <path d="M275 192L167 245V375L262 300Z" fill="#768fac"/>
        <path d="M60 192L167 245L275 192M167 245V375" fill="none" stroke="#5a7490" stroke-width="2"/>
        <text transform="translate(212,213) rotate(205)" font-size="23" fill="#41566f" font-family="Liberation Sans">FRONTAL</text>
        <text transform="translate(158,315) rotate(207)" font-size="23" fill="#41566f" font-family="Liberation Sans">INFERIOR</text>
        <text transform="translate(213,232) rotate(82)" font-size="23" fill="#41566f" font-family="Liberation Sans">DERECHA</text>
      </svg>

      <!-- navigation bar -->
      <div class="absolute left-[1396px] top-[147px] w-[33px] h-[197px] rounded-[4px] border-2 border-[#2b5a8c] bg-[#7f9cbc] flex flex-col items-center">
        <span class="shrink-0 self-end mr-[2px] mt-[2px] w-[9px] h-[9px] rounded-full bg-[#4f6b8a] text-white text-[8px] leading-[8px] text-center">×</span>
        <svg class="shrink-0 mt-[9px] w-[23px] h-[24px] opacity-90"><use href="#i-wheel"/></svg>
        <span class="shrink-0 mt-[4px] text-[7px] leading-[8px] text-[#4f6b8a]">▼</span>
        <span class="shrink-0 mt-[3px] w-[26px] h-px bg-[#4f6b8a]"></span>
        <svg class="shrink-0 mt-[7px] w-[16px] h-[16px]"><use href="#i-hand"/></svg>
        <svg class="shrink-0 mt-[8px] w-[16px] h-[16px] opacity-80"><use href="#i-zoom"/></svg>
        <span class="shrink-0 mt-[4px] text-[7px] leading-[8px] text-[#4f6b8a]">▼</span>
        <svg class="shrink-0 mt-[5px] w-[16px] h-[16px] opacity-70"><use href="#i-orbit"/></svg>
        <span class="shrink-0 mt-[5px] text-[7px] leading-[8px] text-[#4f6b8a]">▼</span>
        <svg class="shrink-0 mt-[7px] w-[16px] h-[16px]"><use href="#i-face"/></svg>
        <span class="shrink-0 self-end mr-[2px] mt-[8px] w-[9px] h-[9px] rounded-full bg-[#4f6b8a] text-white text-[7px] leading-[8px] text-center">▾</span>
      </div>

      <!-- axis triad -->
      <svg class="absolute left-[30px] top-[740px] w-[60px] h-[60px]" viewBox="0 0 60 60">
        <path d="M23 40V20" stroke="#0a0a9a"/><path d="M23 40L38 31" stroke="#0f8a2a"/><path d="M23 40L38 47" stroke="#9a1a1a"/>
        <path d="M18 26Q23 12 28 26Z" fill="#0a0a8a"/><path d="M32 26L43 28L37 37Z" fill="#0c7a1c"/><path d="M34 41L41 42L42 51L33 50Z" fill="#a80f0f"/>
        <text x="19" y="16" font-size="13" fill="#1a2ad0" font-family="Liberation Sans">Z</text>
        <text x="44" y="29" font-size="12" fill="#18c040" font-family="Liberation Sans">Y</text>
        <text x="44" y="59" font-size="12" fill="#b01818" font-family="Liberation Sans">X</text>
      </svg>
    </div>

    <!-- document tabs -->
    <div class="h-[23px] flex border-t border-[#888] bg-linear-to-b from-[#dcdcdc] to-[#bcbcbc] text-[#333]">
      <div class="w-[20px] h-[21px] flex items-center justify-center border border-[#444] bg-[#eee]"><svg class="w-[15px] h-[15px]"><use href="#i-cascade"/></svg></div>
      <div class="w-[20px] h-[21px] flex items-center justify-center border border-l-0 border-[#444] bg-[#eee]"><svg class="w-[15px] h-[15px]"><use href="#i-tile"/></svg></div>
      <div class="w-[20px] h-[21px] flex justify-center border border-l-0 border-[#444] bg-[#eee] text-[9px] leading-[14px]">▲</div>
      <div class="w-[143px] h-[21px] pl-[8px] bg-white border border-t-0 border-[#777] rounded-b-[6px] leading-[21px] flex justify-between pr-[4px]"><span>NG_2010-Verano.iam</span><span class="text-[10px] text-[#777] leading-[16px]">⊠</span></div>
      <div class="w-[85px] h-[21px] text-center bg-[#d8d8d8] border border-t-0 border-l-0 border-[#777] rounded-b-[6px] leading-[21px]">Manzana.ipt</div>
      <div class="w-[110px] h-[21px] text-center bg-[#d8d8d8] border border-t-0 border-l-0 border-[#777] rounded-b-[6px] leading-[21px]">NG_2010-Verano</div>
    </div>
  </main>
</div>

<!-- status bar -->
<footer class="h-[20px] flex border-t border-[#999] border-b border-b-[#222] bg-linear-to-b from-[#fafafa] to-[#d6d6d6] leading-[19px] text-[#222]">
  <span class="flex-1 pl-[2px]">Listo</span>
  <span class="w-[30px] border-r border-[#bbb] mr-[8px]">18</span>
  <span class="w-[30px] border-r border-[#bbb] mr-[3px]">5</span>
  <span class="w-[14px] my-[1px] bg-[#0a9a0a]"></span>
  <span class="w-[22px] my-[1px] bg-linear-to-r from-[#222] to-[#777]"></span>
</footer>

<!-- iProperties dialog -->
<div class="absolute left-[65px] top-[164px] w-[490px] h-[641px] px-[6px] border border-[#2d3338] rounded-[6px] bg-[linear-gradient(90deg,#dcdfe1_0%,#d2d6d9_36%,#6f8cab_42%,#4f7094_100%)] shadow-[0_3px_16px_rgba(0,0,0,0.75)] text-[11px] text-[#333]">
  <div class="relative h-[27px] text-[12px] leading-[27px] text-[#222]">NG_2010-Verano.iam iProperties
    <div class="absolute right-0 top-0 w-[46px] h-[19px] rounded-b-[4px] border border-t-0 border-[#6a2a20] bg-linear-to-b from-[#d98a7c] to-[#b6341f] text-white text-center font-bold text-[13px] leading-[17px]">X</div>
  </div>
  <div class="h-[606px] border border-[#4d5a66] bg-[#f0f0f0] px-[5px]">
    <!-- tabs -->
    <div class="flex items-end h-[27px] pl-[3px] gap-[2px] text-center">
      <div class="w-[47px] h-[18px] leading-[20px] bg-[#eee] border border-b-0 border-[#a0a0a0]">General</div>
      <div class="w-[54px] h-[18px] leading-[20px] bg-[#eee] border border-b-0 border-[#a0a0a0]">Resumen</div>
      <div class="w-[53px] h-[18px] leading-[20px] bg-[#eee] border border-b-0 border-[#a0a0a0]">Proyecto</div>
      <div class="w-[43px] h-[18px] leading-[20px] bg-[#eee] border border-b-0 border-[#a0a0a0]">Estado</div>
      <div class="w-[81px] h-[18px] leading-[20px] bg-[#eee] border border-b-0 border-[#a0a0a0]">Personalizadas</div>
      <div class="w-[48px] h-[18px] leading-[20px] bg-[#eee] border border-b-0 border-[#a0a0a0]">Guardar</div>
      <div class="relative z-10 -mb-px -ml-[1px] w-[106px] h-[21px] leading-[19px] bg-white border border-b-0 border-[#a0a0a0]">Propiedades físicas</div>
    </div>
    <!-- page -->
    <div class="h-[540px] w-[463px] border border-[#8a8a8a] bg-white pl-[7px] pt-[8px]">
      <div class="pl-[3px] h-[16px] leading-[18px]">Material</div>
      <div class="flex items-start h-[20px] mt-[2px] pl-[4px]">
        <div class="mt-[3px] w-[332px] h-[20px] border border-[#c8c8c8] rounded-[2px] bg-[#f3f3f3] text-right pr-[5px] text-[8px] leading-[20px] text-[#aaa]">▼</div>
        <div class="ml-[12px] w-[95px] h-[20px] border border-[#c8c8c8] rounded-[2px] bg-[#f5f5f5] text-center leading-[20px] text-[#999]">Actualizar</div>
      </div>
      <div class="flex mt-[12px] h-[41px] pl-[3px]">
        <div class="w-[153px]">
          <div class="h-[16px] leading-[16px]">Densidad</div>
          <div class="mt-[5px] ml-[1px] w-[146px] h-[19px] border border-[#dfe3e6] text-right pr-[5px] leading-[18px]">7,850 g/cm^3</div>
        </div>
        <div class="w-[192px]">
          <div class="h-[16px] leading-[16px]">Precisión solicitada</div>
          <div class="mt-[5px] ml-[1px] w-[148px] h-[20px] border border-[#707070] rounded-[2px] bg-linear-to-b from-[#f4f4f4] to-[#d4d4d4] flex items-center justify-between px-[3px]"><span class="pt-[2px]">Baja</span><span class="text-[8px] text-black">▼</span></div>
        </div>
        <div class="w-[95px] h-[20px] border border-[#707070] rounded-[2px] bg-linear-to-b from-[#f6f6f6] to-[#d0d0d0] text-center leading-[20px]">Portapapeles</div>
      </div>

      <!-- general properties -->
      <div class="relative mt-[11px] w-[439px] h-[153px] border border-[#dce1e8] rounded-[3px] pl-[10px] pt-[16px]">
        <span class="absolute left-[6px] -top-[8px] bg-white px-[2px] leading-[18px] h-[16px]">Propiedades generales</span>
        <div class="flex items-center h-[16px]">
          <div class="w-[215px] flex items-center"><span class="w-[12px] h-[12px] border border-[#8a8a8a] bg-[#f2f2f2] mr-[3px]"></span>Incluir soldaduras ficticias</div>
          <div class="flex items-center"><span class="w-[12px] h-[12px] border border-[#8a8a8a] bg-[#f2f2f2] mr-[3px]"></span>Incluir anulaciones de CTDAD</div>
        </div>
        <div class="ml-[235px] h-[16px] leading-[18px]">Centro de gravedad</div>
        <div class="mt-[3px] flex items-center h-[19px]">
          <span class="w-[55px] text-right mr-[8px] pt-[2px]">Masa</span>
          <div class="w-[100px] h-[19px] border border-[#dfe3e6] px-[5px] leading-[19px]"><div class="h-[17px] overflow-hidden whitespace-nowrap">4,492 lbmasa (Error relativo</div></div>
          <svg class="ml-[18px] w-[16px] h-[11px] -mt-[3px]"><use href="#i-calc"/></svg>
          <span class="w-[40px] text-center pl-[18px] pr-[4px] pt-[2px]">X</span>
          <div class="w-[100px] h-[19px] border border-[#dfe3e6] px-[5px] leading-[19px]"><div class="h-[17px] overflow-hidden whitespace-nowrap">-0,000 in (Error relativo</div></div>
        </div>
        <div class="mt-[17px] flex items-center h-[19px]">
          <span class="w-[55px] text-right mr-[8px] pt-[2px]">Área</span>
          <div class="w-[100px] h-[19px] border border-[#dfe3e6] px-[5px] leading-[19px]"><div class="h-[17px] overflow-hidden whitespace-nowrap">150,551 in^2 (Error relativo</div></div>
          <span class="w-[34px]"></span>
          <span class="w-[40px] text-center pl-[18px] pr-[4px] pt-[2px]">Y</span>
          <div class="w-[100px] h-[19px] border border-[#dfe3e6] px-[5px] leading-[19px]"><div class="h-[17px] overflow-hidden whitespace-nowrap">-0,000 in (Error relativo</div></div>
        </div>
        <div class="mt-[15px] flex items-center h-[19px]">
          <span class="w-[55px] text-right mr-[8px] pt-[2px]">Volumen</span>
          <div class="w-[100px] h-[19px] border border-[#dfe3e6] px-[5px] leading-[19px]"><div class="h-[17px] overflow-hidden whitespace-nowrap">15,838 in^3 (Error relativo</div></div>
          <svg class="ml-[18px] w-[16px] h-[11px] -mt-[3px]"><use href="#i-calc"/></svg>
          <span class="w-[40px] text-center pl-[18px] pr-[4px] pt-[2px]">Z</span>
          <div class="w-[100px] h-[19px] border border-[#dfe3e6] px-[5px] leading-[19px]"><div class="h-[17px] overflow-hidden whitespace-nowrap">0,636 in (Error relativo</div></div>
        </div>
        <span class="absolute left-[67px] top-[114px] w-[114px] h-[34px] border-[3px] border-[#e0000f] rounded-[12px]"></span>
      </div>

      <!-- inertial properties -->
      <div class="relative mt-[16px] ml-[4px] w-[441px] h-[180px] border border-[#dce1e8] rounded-[3px] pt-[14px]">
        <span class="absolute left-[6px] -top-[8px] bg-white px-[2px] leading-[18px] h-[16px]">Propiedades inerciales</span>
        <div class="flex pl-[22px] gap-[58px] text-center">
          <div class="w-[79px] h-[20px] border border-[#2f6ea3] rounded-[2px] bg-linear-to-b from-[#bcdcf3] to-[#4f9fd6] leading-[20px]">Principal</div>
          <div class="w-[60px] h-[20px] border border-[#707070] rounded-[2px] bg-linear-to-b from-[#f6f6f6] to-[#d0d0d0] leading-[20px]">Global</div>
          <div class="w-[120px] h-[20px] border border-[#707070] rounded-[2px] bg-linear-to-b from-[#f6f6f6] to-[#d0d0d0] leading-[20px]">Centro de gravedad</div>
        </div>
        <div class="mt-[3px] ml-[37px] h-[16px] leading-[18px]">Momentos principales</div>
        <div class="mt-[5px] flex items-center h-[19px]">
          <span class="w-[38px] text-right pr-[8px] pt-[2px]">I1</span>
          <div class="w-[82px] h-[19px] border border-[#dfe3e6] pl-[5px] pr-[2px] leading-[19px]"><div class="h-[17px] overflow-hidden whitespace-nowrap">10,362 lbmasa in^2</div></div>
          <span class="w-[42px] text-right pr-[8px] pt-[2px]">I2</span>
          <div class="w-[82px] h-[19px] border border-[#dfe3e6] pl-[5px] pr-[2px] leading-[19px]"><div class="h-[17px] overflow-hidden whitespace-nowrap">10,362 lbmasa in^2</div></div>
          <span class="w-[43px] text-right pr-[8px] pt-[2px]">I3</span>
          <div class="w-[82px] h-[19px] border border-[#dfe3e6] pl-[5px] pr-[2px] leading-[19px]"><div class="h-[17px] overflow-hidden whitespace-nowrap">19,653 lbmasa in^2</div></div>
        </div>
        <div class="mt-[7px] ml-[37px] h-[16px] leading-[18px]">Rotación a principal</div>
        <div class="mt-[5px] flex items-center h-[19px]">
          <span class="w-[38px] text-right pr-[8px] pt-[2px]">Rx</span>
          <div class="w-[82px] h-[19px] border border-[#dfe3e6] pl-[5px] pr-[2px] leading-[19px]"><div class="h-[17px] overflow-hidden whitespace-nowrap">0,00 gr (Error relativo</div></div>
          <span class="w-[42px] text-right pr-[8px] pt-[2px]">Ry</span>
          <div class="w-[82px] h-[19px] border border-[#dfe3e6] pl-[5px] pr-[2px] leading-[19px]"><div class="h-[17px] overflow-hidden whitespace-nowrap">0,00 gr (Error relativo</div></div>
          <span class="w-[43px] text-right pr-[8px] pt-[2px]">Rz</span>
          <div class="w-[82px] h-[19px] border border-[#dfe3e6] pl-[5px] pr-[2px] leading-[19px]"><div class="h-[17px] overflow-hidden whitespace-nowrap">12,39 gr (Error relativo</div></div>
        </div>
      </div>
    </div>
    <!-- footer buttons -->
    <div class="flex mt-[9px] pl-[2px] text-center text-[12px]">
      <div class="w-[20px] h-[21px] border border-[#666] rounded-[2px] bg-[#f0f0f0] flex items-center justify-center"><span class="w-[12px] h-[13px] border border-black bg-[#fff3a8] text-[10px] leading-[11px] font-bold text-black">?</span></div>
      <div class="ml-[152px] w-[90px] h-[21px] border border-[#2f7fb5] rounded-[2px] bg-linear-to-b from-[#e6f5fd] to-[#a8dbf6] leading-[21px] text-[#222]">Cerrar</div>
      <div class="ml-[9px] w-[90px] h-[21px] border border-[#c8c8c8] rounded-[2px] bg-[#f4f4f4] leading-[21px] text-[#999]">Cancelar</div>
      <div class="ml-[9px] w-[90px] h-[21px] border border-[#c8c8c8] rounded-[2px] bg-[#f4f4f4] leading-[21px] text-[#999]">Aplicar</div>
    </div>
  </div>
</div>

<script>
  // model browser rows, 18px each
  const rows = [
    { name: 'NG_2010-Verano.iam', root: true },
    { name: 'Representaciones', icon: 'i-folder', plus: true },
    { name: 'Origen', icon: 'i-folder', minus: true },
    { name: 'Plano YZ', icon: 'i-plane', lvl: 1, plus: true },
    { name: 'Plano XZ', icon: 'i-plane', lvl: 1, plus: true },
    { name: 'Plano XY', icon: 'i-plane', lvl: 1, plus: true },
    { name: 'Eje X', icon: 'i-axis', lvl: 1 },
    { name: 'Eje Y', icon: 'i-axis', lvl: 1 },
    { name: 'Eje Z', icon: 'i-axis', lvl: 1, plus: true },
    { name: 'Punto central', icon: 'i-point', lvl: 1, last: true }
  ];
  for (let i = 1; i <= 8; i++) rows.push({ name: 'Plano' + i, icon: 'i-plane', plus: true });
  for (let i = 1; i <= 16; i++) rows.push({ name: 'Manzana:' + i, icon: 'i-part', plus: true });
  rows.push({ name: 'Ciruela:1', icon: 'i-part', plus: true });
  rows.push({ name: 'Plátano:1', icon: 'i-part', plus: true, end: true });

  function box(x, minus) {
    const bar = minus ? '' : `<path d="M${x} 6.500v5" stroke="#000"/>`;
    return `<path d="M${x - 4.5} 4.500h9v9h-9z" fill="#fff" stroke="#777"/><path d="M${x - 2.5} 9h5" stroke="#000"/>${bar}`;
  }

  document.getElementById('tree').innerHTML = rows.map((r, i) => {
    if (r.root) {
      return `<div class="flex items-center h-[18px]"><svg class="ml-[5px] mr-[2px] w-[16px] h-[16px]"><use href="#i-asm"/></svg><span class="pl-[1px] pr-[2px] bg-[#3399ff] text-white font-semibold">${r.name}</span></div>`;
    }
    const lvl = r.lvl || 0;
    let lines = r.end ? '<path d="M8.500 0v9" stroke="#888"/>' : '<path d="M8.500 0v18" stroke="#888"/>';
    if (lvl) {
      lines += r.last ? '<path d="M27.500 0v9h13" fill="none" stroke="#888"/>' : '<path d="M27.500 0v18M27.500 9h13" fill="none" stroke="#888"/>';
      if (r.plus) lines += box(27.5);
    } else {
      lines += '<path d="M8.500 9h14" stroke="#888"/>' + (i === 2 ? '<path d="M27.500 12v6" stroke="#888"/>' : '');
      lines += box(8.5, r.minus);
    }
    const w = lvl ? 44 : 24;
    return `<div class="flex items-center h-[18px] whitespace-nowrap text-[#222]"><svg class="shrink-0" width="${w}" height="18">${lines}</svg><svg class="shrink-0 w-[16px] h-[16px] mr-[2px]"><use href="#${r.icon}"/></svg><span>${r.name}</span></div>`;
  }).join('');
</script>
</body>
</html>
